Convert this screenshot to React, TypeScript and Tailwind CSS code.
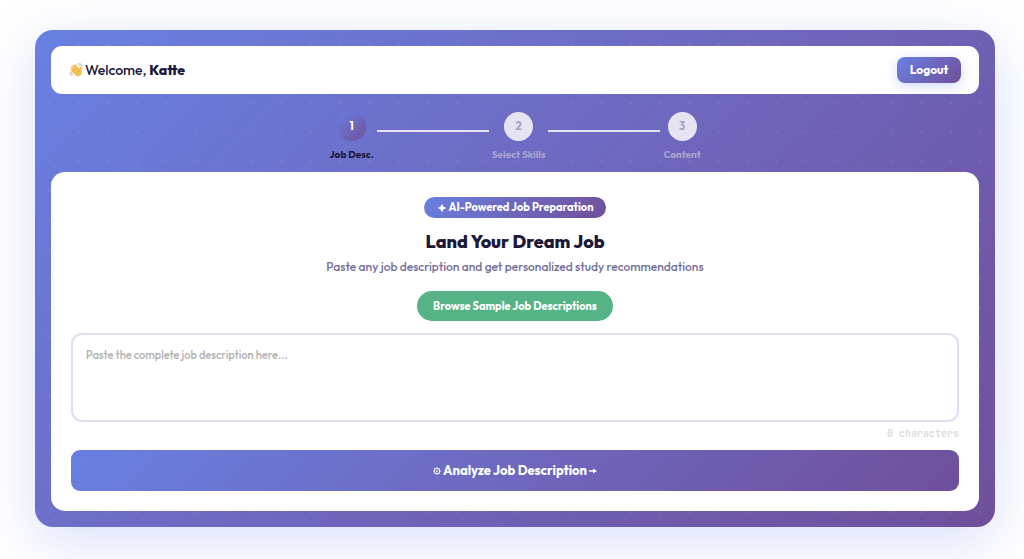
import { Fragment, useState } from "react";

const steps = ["Job Desc.", "Select Skills", "Content"];

function WavingHand() {
  return (
    <svg viewBox="0 0 28 28" className="h-3.5 w-3.5 shrink-0" aria-hidden="true">
      <g fill="none" stroke="#f5c455" strokeLinecap="round">
        <path d="M13 17 5.5 9.5" strokeWidth="4" />
        <path d="M15 15 8.5 5" strokeWidth="4" />
        <path d="M18 14 13.5 4.5" strokeWidth="4" />
        <path d="M12 20 4.5 14.5" strokeWidth="3.6" />
        <path d="M23 17 23.5 9" strokeWidth="4" />
      </g>
      <path d="M8 15 19 9l6 6c2 5-.5 10-5 11.500-4 1-7-1-9.500-4.500L6 17z" fill="#f5c455" />
      <g fill="none" stroke="#dba04a" strokeWidth="1" strokeLinecap="round">
        <path d="m7 8.500 5 6M11 5l5 7.500M6 13l5 4.500M20.500 13c-3 1-3.500 4-2.500 7" />
      </g>
      <g fill="none" stroke="#a9adb5" strokeWidth="1.800" strokeLinecap="round">
        <path d="M18 2c2 .5 3.500 2 4 4M21.500 1c2 .8 3.500 2.500 4 4.500M1.500 20c.5 2.500 2 4 4.500 5M4 19c.5 1.800 1.500 2.800 3 3.500" />
      </g>
    </svg>
  );
}

function GearIcon() {
  return (
    <svg viewBox="0 0 16 16" className="h-2 w-2 shrink-0" fill="none" stroke="currentColor" aria-hidden="true">
      <circle cx="8" cy="8" r="5.500" strokeWidth="2" />
      <circle cx="8" cy="8" r="1.500" strokeWidth="1.500" />
      <path d="M8 0v3M8 13v3M0 8h3M13 8h3M2.300 2.300l2 2M11.700 11.700l2 2M2.300 13.700l2-2M11.700 4.300l2-2" strokeWidth="1.500" />
    </svg>
  );
}

function SparkIcon() {
  return (
    <svg viewBox="0 0 20 20" className="h-2.5 w-2.5 shrink-0" fill="currentColor" aria-hidden="true">
      <path d="M10 1c1.500 5.500 3.500 7.500 9 9-5.500 1.500-7.500 3.500-9 9-1.500-5.500-3.500-7.500-9-9 5.500-1.500 7.500-3.500 9-9z" />
    </svg>
  );
}

function ArrowIcon() {
  return (
    <svg viewBox="0 0 16 12" className="h-1.5 w-2 shrink-0" aria-hidden="true">
      <path d="M0 4.500h8V1l8 5-8 5V7.500H0z" fill="currentColor" />
    </svg>
  );
}

function Stepper() {
  return (
    <div className="flex justify-center gap-[3px] pt-[18px] pb-[9px]">
      {steps.map((label, i) => (
        <Fragment key={label}>
          {i > 0 && <span className="mt-[18px] h-0.5 w-28 bg-[#e6e3f3]" />}
          <div className="flex flex-col items-center">
            <span
              className={
                i === 0
                  ? "flex size-[29px] items-center justify-center rounded-full bg-linear-135 from-[#6880e2] to-[#6f4f9b] text-[11px] font-bold text-white"
                  : "flex size-[29px] items-center justify-center rounded-full bg-[#e6e3f3] text-[11px] font-bold text-[#a5a1be]"
              }
            >
              {i + 1}
            </span>
            <span
              className={
                i === 0
                  ? "mt-1.5 text-[10px] leading-4 font-bold whitespace-nowrap text-[#1e1838]"
                  : "mt-1.5 text-[10px] leading-4 font-bold whitespace-nowrap text-[#aaa3cf]"
              }
            >
              {label}
            </span>
          </div>
        </Fragment>
      ))}
    </div>
  );
}

export default function App() {
  const [text, setText] = useState("");
  return (
    <div className="min-h-screen overflow-hidden bg-white pt-[30px] pr-[29px] pb-8 pl-[35px] font-['Outfit','Lato',sans-serif] text-[#1e1838]">
      <div className="mx-auto max-w-5xl rounded-[18px] bg-linear-135 from-[#6880e2] to-[#6f4f9b] shadow-[0_14px_56px_rgba(102,126,234,0.25)]">
        <div className="rounded-[18px] bg-[radial-gradient(circle,rgba(255,255,255,0.08)_1px,transparent_1px)] bg-size-[29px_29px] bg-repeat-round p-4">
          <header className="flex h-12 items-center justify-between rounded-[11px] bg-white px-[18px]">
            <p className="flex items-center gap-0.5 text-[14px] font-medium">
              <WavingHand />
              <span>
                Welcome, <strong className="font-extrabold">Katte</strong>
              </span>
            </p>
            <button
              type="button"
              className="h-[26px] w-16 rounded-lg bg-linear-135 from-[#6880e2] to-[#6f4f9b] text-[12px] font-bold text-white shadow-[0_3px_12px_rgba(102,126,234,0.3)]"
            >
              Logout
            </button>
          </header>

          <Stepper />

          <main className="flex flex-col items-center rounded-[14px] bg-white px-5 pt-[25px] pb-5">
            <p className="flex h-[21px] items-center gap-0.5 rounded-full bg-linear-135 from-[#6880e2] to-[#6f4f9b] px-[13px] text-[11px] font-bold text-white">
              <SparkIcon />
              AI-Powered Job Preparation
            </p>
            <h1 className="mt-3 text-[18px] leading-6 font-extrabold">Land Your Dream Job</h1>
            <label htmlFor="job" className="mt-[3px] text-[12px] leading-5 font-medium text-[#736f99]">
              Paste any job description and get personalized study recommendations
            </label>
            <button type="button" className="mt-[14px] h-[30px] rounded-full bg-[#55b385] px-4 text-[11px] font-bold text-white">
              Browse Sample Job Descriptions
            </button>
            <textarea
              id="job"
              value={text}
              onChange={(e) => setText(e.target.value)}
              placeholder="Paste the complete job description here..."
              className="mt-3 block h-[89px] w-full resize-none rounded-[11px] border-2 border-[#e1ddf3] bg-white px-[13px] py-2.5 text-[11px] leading-5 font-medium outline-none placeholder:text-[#b0b0b0]"
            />
            <p className="mt-1 self-end font-['JetBrains_Mono','Liberation_Mono',monospace] text-[10px] leading-4 font-semibold text-[#dcdcdc]">
              {text.length} characters
            </p>
            <button
              type="button"
              className="mt-2 flex h-[41px] w-full items-center justify-center gap-0.5 rounded-[9px] bg-linear-135 from-[#6880e2] to-[#6f4f9b] text-[13px] font-bold text-white"
            >
              <GearIcon />
              Analyze Job Description
              <ArrowIcon />
            </button>
          </main>
        </div>
      </div>
    </div>
  );
}
